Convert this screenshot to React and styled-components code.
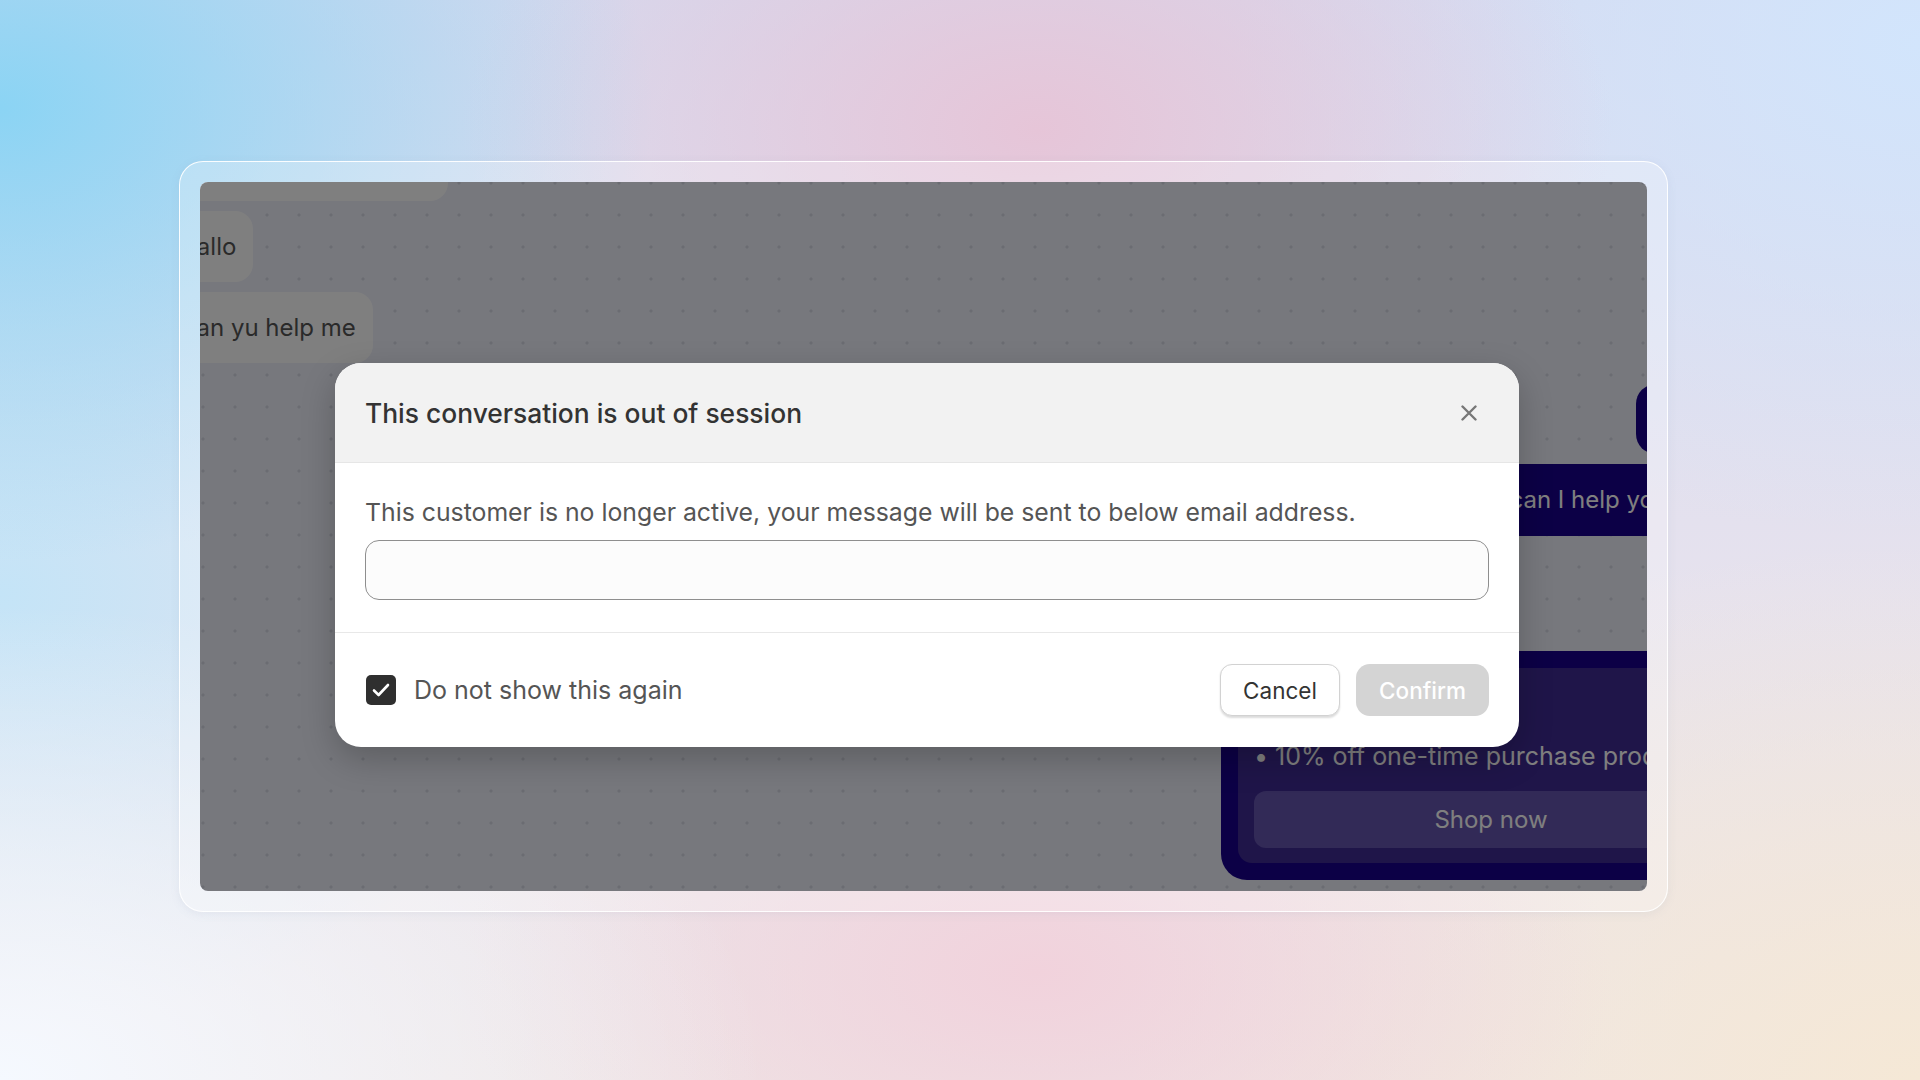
import React from "react";
import styled, { createGlobalStyle } from "styled-components";

const GlobalStyle = createGlobalStyle`
  html, body { margin: 0; padding: 0; }
  body {
    font-family: Inter, "Noto Sans", "Liberation Sans", sans-serif;
    -webkit-font-smoothing: antialiased;
  }
  * { box-sizing: border-box; }
`;

const Page = styled.div`
  width: 1920px;
  height: 1080px;
  overflow: hidden;
  padding: 161px 0 0 179px;
  background:
    radial-gradient(ellipse 34% 42% at 0% 10%, rgba(139, 212, 244, 1) 0%, rgba(139, 212, 244, 0) 100%),
    radial-gradient(ellipse 30% 34% at 54% 12%, rgba(230, 197, 216, 1) 0%, rgba(230, 197, 216, 0) 100%),
    radial-gradient(ellipse 36% 46% at 100% 4%, rgba(210, 229, 252, 1) 0%, rgba(210, 229, 252, 0) 100%),
    radial-gradient(ellipse 40% 44% at 0% 100%, rgba(245, 249, 255, 1) 0%, rgba(245, 249, 255, 0) 100%),
    radial-gradient(ellipse 30% 30% at 54% 90%, rgba(241, 210, 220, 1) 0%, rgba(241, 210, 220, 0) 100%),
    radial-gradient(ellipse 42% 50% at 100% 100%, rgba(245, 232, 214, 1) 0%, rgba(245, 232, 214, 0) 100%),
    radial-gradient(ellipse 30% 40% at 0% 55%, rgba(196, 228, 247, 1) 0%, rgba(196, 228, 247, 0) 100%),
    linear-gradient(180deg, #d6d9ee 0%, #e6e2ee 55%, #eee6e6 100%);
`;

const Frame = styled.div`
  width: 1489px;
  height: 751px;
  padding: 20px;
  border: 1.5px solid rgba(255, 255, 255, 0.92);
  border-radius: 24px;
  background: rgba(255, 255, 255, 0.26);
  box-shadow: 0 2px 10px rgba(120, 140, 170, 0.1);
`;

const ChatArea = styled.div`
  position: relative;
  height: 100%;
  overflow: hidden;
  border-radius: 8px;
  background-color: #eef0fa;
  background-image: radial-gradient(circle, #d6d8e4 1.3px, rgba(214, 216, 228, 0) 1.8px);
  background-size: 32px 32px;
  background-position: -13px -15px;
`;

const Thread = styled.div`
  display: flex;
  flex-direction: column;
  align-items: flex-start;
  font-size: 24px;
`;

const Incoming = styled.div`
  margin-left: -38px;
  margin-top: ${(p) => (p.$first ? "-52px" : "10px")};
  width: ${(p) => (p.$w ? `${p.$w}px` : "auto")};
  background: #ffffff;
  color: #555555;
  border-radius: 18px;
  padding: 21px 17px;
  line-height: 29px;
  white-space: nowrap;
`;

const OutgoingPill = styled.div`
  align-self: flex-end;
  margin-top: 21px;
  margin-right: -189px;
  width: 200px;
  background: #18008c;
  color: #ffffff;
  border-radius: 20px;
  padding: 20px 22px;
  line-height: 30px;
  white-space: nowrap;
`;

const OutgoingBand = styled.div`
  align-self: flex-end;
  margin-top: 10px;
  margin-right: -230px;
  width: 480px;
  background: #18008c;
  color: #ffffff;
  padding: 21px 17px;
  line-height: 30px;
  white-space: nowrap;
`;

const PromoCard = styled.div`
  align-self: flex-end;
  margin-top: 115px;
  margin-right: -114px;
  width: 540px;
  padding: 17px;
  background: #18008c;
  border-radius: 26px;
`;

const PromoInner = styled.div`
  display: flex;
  flex-direction: column;
  background: #3e2a92;
  border-radius: 14px;
  padding: 16px 16px 15px;
  color: #ffffff;
`;

const PromoTitle = styled.div`
  font-size: 24px;
  font-weight: 700;
  line-height: 30px;
  margin-bottom: 28px;
`;

const PromoItem = styled.div`
  display: flex;
  gap: 7px;
  font-size: 25px;
  line-height: 29px;
  margin-bottom: 20px;
  white-space: nowrap;
`;

const ShopButton = styled.div`
  height: 57px;
  border-radius: 12px;
  background: #6454ae;
  display: flex;
  align-items: center;
  justify-content: center;
  font-size: 24px;
  color: #ffffff;
`;

const Backdrop = styled.div`
  position: absolute;
  inset: 0;
  background: rgba(0, 0, 0, 0.5);
  display: flex;
  align-items: flex-start;
  justify-content: flex-start;
  padding: 181px 0 0 135px;
`;

const Modal = styled.div`
  width: 1184px;
  background: #ffffff;
  border-radius: 26px;
  overflow: hidden;
  box-shadow: 0 12px 34px rgba(0, 0, 0, 0.22);
`;

const Header = styled.div`
  height: 100px;
  display: flex;
  align-items: center;
  justify-content: space-between;
  padding: 0 30px;
  background: #f2f2f2;
  border-bottom: 1px solid #e6e6e6;
`;

const Title = styled.h2`
  margin: 0;
  font-size: 26.4px;
  font-weight: 500;
  color: #333333;
  letter-spacing: 0;
`;

const CloseButton = styled.button`
  width: 40px;
  height: 40px;
  display: flex;
  align-items: center;
  justify-content: center;
  border: none;
  background: transparent;
  padding: 0;
  cursor: pointer;
`;

const Body = styled.div`
  display: flex;
  flex-direction: column;
  gap: 12px;
  padding: 34px 30px 32px;
`;

const Message = styled.p`
  margin: 0;
  font-size: 24.8px;
  line-height: 31px;
  color: #555555;
`;

const EmailInput = styled.input`
  height: 60px;
  width: 100%;
  border: 1.5px solid #8e8e8e;
  border-radius: 14px;
  background: #fcfcfc;
  padding: 0 18px;
  font-family: inherit;
  font-size: 22px;
  outline: none;
`;

const Footer = styled.div`
  display: flex;
  align-items: center;
  justify-content: space-between;
  padding: 31px 30px;
  border-top: 1px solid #e8e8e8;
`;

const CheckLabel = styled.label`
  display: flex;
  align-items: center;
  gap: 18px;
  padding-left: 1px;
  font-size: 25px;
  color: #555555;
  cursor: pointer;
`;

const Box = styled.span`
  width: 30px;
  height: 30px;
  border-radius: 5px;
  background: #2f2f2f;
  display: flex;
  align-items: center;
  justify-content: center;
`;

const Actions = styled.div`
  display: flex;
  gap: 16px;
`;

const Button = styled.button`
  height: 52px;
  width: ${(p) => p.$w}px;
  border-radius: ${(p) => (p.$primary ? "14px" : "12px")};
  border: ${(p) => (p.$primary ? "none" : "1px solid #d2d2d2")};
  background: ${(p) => (p.$primary ? "#d4d4d4" : "#ffffff")};
  color: ${(p) => (p.$primary ? "#ffffff" : "#333333")};
  box-shadow: ${(p) => (p.$primary ? "none" : "0 1.5px 2px rgba(0,0,0,0.14)")};
  font-family: inherit;
  font-size: 22.5px;
  font-weight: ${(p) => (p.$primary ? 500 : 400)};
  cursor: pointer;
`;

const XIcon = () => (
  <svg width="16" height="16" viewBox="0 0 16 16" fill="none">
    <path d="M1.5 1.5 L14.5 14.5 M14.5 1.5 L1.5 14.5" stroke="#777777" strokeWidth="2.4" strokeLinecap="round" />
  </svg>
);

const CheckIcon = () => (
  <svg width="30" height="30" viewBox="0 0 30 30" fill="none">
    <path d="M8 15.5 L12.6 20 L22 10" stroke="#ffffff" strokeWidth="2.6" strokeLinecap="round" strokeLinejoin="round" />
  </svg>
);

export default function App() {
  return (
    <>
      <GlobalStyle />
      <Page>
        <Frame>
          <ChatArea>
            <Thread>
              <Incoming $first $w={286}>Hi, I have a question</Incoming>
              <Incoming>Hallo</Incoming>
              <Incoming>Can yu help me</Incoming>
              <OutgoingPill>Hello!</OutgoingPill>
              <OutgoingBand>Hi! How can I help you today?</OutgoingBand>
              <PromoCard>
                <PromoInner>
                  <PromoTitle>Subscribe &amp; save</PromoTitle>
                  <PromoItem>
                    <span>•</span>
                    <span>10% off one-time purchase products</span>
                  </PromoItem>
                  <ShopButton>Shop now</ShopButton>
                </PromoInner>
              </PromoCard>
            </Thread>
            <Backdrop>
              <Modal>
                <Header>
                  <Title>This conversation is out of session</Title>
                  <CloseButton aria-label="Close">
                    <XIcon />
                  </CloseButton>
                </Header>
                <Body>
                  <Message>
                    This customer is no longer active, your message will be sent to below email address.
                  </Message>
                  <EmailInput type="email" />
                </Body>
                <Footer>
                  <CheckLabel>
                    <Box>
                      <CheckIcon />
                    </Box>
                    Do not show this again
                  </CheckLabel>
                  <Actions>
                    <Button $w={120}>Cancel</Button>
                    <Button $primary $w={133}>Confirm</Button>
                  </Actions>
                </Footer>
              </Modal>
            </Backdrop>
          </ChatArea>
        </Frame>
      </Page>
    </>
  );
}
